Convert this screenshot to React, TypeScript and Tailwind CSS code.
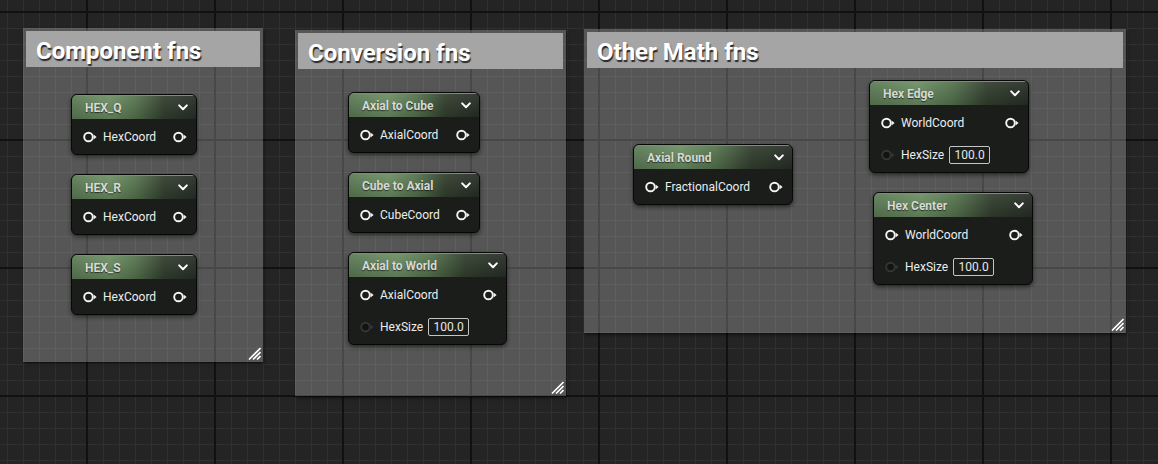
import React from "react";

type Row = { label: string; kind: "coord" | "size" };
type NodeDef = { title: string; pos: string; rows: Row[] };

const nodes: NodeDef[] = [
  { title: "HEX_Q", pos: "left-[71px] top-[94px] w-[126px]", rows: [{ label: "HexCoord", kind: "coord" }] },
  { title: "HEX_R", pos: "left-[71px] top-[174px] w-[126px]", rows: [{ label: "HexCoord", kind: "coord" }] },
  { title: "HEX_S", pos: "left-[71px] top-[254px] w-[126px]", rows: [{ label: "HexCoord", kind: "coord" }] },
  { title: "Axial to Cube", pos: "left-[348px] top-[92px] w-[132px]", rows: [{ label: "AxialCoord", kind: "coord" }] },
  { title: "Cube to Axial", pos: "left-[348px] top-[172px] w-[132px]", rows: [{ label: "CubeCoord", kind: "coord" }] },
  {
    title: "Axial to World",
    pos: "left-[348px] top-[252px] w-[159px]",
    rows: [
      { label: "AxialCoord", kind: "coord" },
      { label: "HexSize", kind: "size" },
    ],
  },
  { title: "Axial Round", pos: "left-[633px] top-[144px] w-[160px]", rows: [{ label: "FractionalCoord", kind: "coord" }] },
  {
    title: "Hex Edge",
    pos: "left-[869px] top-[80px] w-[160px]",
    rows: [
      { label: "WorldCoord", kind: "coord" },
      { label: "HexSize", kind: "size" },
    ],
  },
  {
    title: "Hex Center",
    pos: "left-[873px] top-[192px] w-[160px]",
    rows: [
      { label: "WorldCoord", kind: "coord" },
      { label: "HexSize", kind: "size" },
    ],
  },
];

const comments = [
  { title: "Component fns", pos: "left-[23px] top-[28px] w-[240px] h-[334px]" },
  { title: "Conversion fns", pos: "left-[295px] top-[30px] w-[271px] h-[366px]" },
  { title: "Other Math fns", pos: "left-[584px] top-[29px] w-[542px] h-[304px]" },
];

function Pin({ active = true }: { active?: boolean }) {
  const c = active ? "#f4f4f4" : "#353535";
  return (
    <svg width="15" height="12" viewBox="0 0 15 12" className="shrink-0">
      <circle cx="5.5" cy="6" r="4.3" fill={active ? "none" : "#131313"} stroke={c} strokeWidth="1.9" />
      <path d="M10.6 3.6 L13.6 6 L10.6 8.4 Z" fill={c} />
    </svg>
  );
}

function Chevron() {
  return (
    <svg width="10" height="7" viewBox="0 0 10 7" className="shrink-0">
      <path d="M1.2 1.4 L5 5.2 L8.8 1.4" fill="none" stroke="#ffffff" strokeWidth="2" strokeLinecap="round" strokeLinejoin="round" />
    </svg>
  );
}

function ResizeGrip() {
  return (
    <svg width="13" height="13" viewBox="0 0 13 13" className="absolute right-[2px] bottom-[2px]">
      <path d="M12.5 1 L1 12.5 M12.5 5 L5 12.5 M12.5 9 L9 12.5" stroke="#ffffff" strokeWidth="1.6" />
    </svg>
  );
}

function BpNode({ n }: { n: NodeDef }) {
  return (
    <div
      className={`absolute ${n.pos} flex flex-col rounded-[6px] border border-[#070707] bg-[#1b1d1b] shadow-[0_2px_4px_rgba(0,0,0,0.55)] overflow-hidden`}
    >
      <div className="flex h-6 items-center justify-between border-t border-t-[#7d8f79] bg-[image:linear-gradient(to_bottom,rgba(255,255,255,0.06),rgba(0,0,0,0.16)),linear-gradient(90deg,#5e7c57_0%,#6e9066_30%,#56744f_52%,#33402f_74%,#282f28_100%)] pl-[13px] pr-[8px]">
        <span className="text-[12px] font-bold leading-none text-[#d6d9d5] [text-shadow:0_1px_1px_rgba(0,0,0,0.6)]">
          {n.title}
        </span>
        <Chevron />
      </div>
      <div className="flex flex-col gap-3 pt-2 pb-[7px]">
        {n.rows.map((r, i) =>
          r.kind === "coord" ? (
            <div key={i} className="flex h-5 items-center pl-[11px] pr-[8px]">
              <Pin />
              <span className="ml-[5px] text-[12px] leading-none text-[#ececec]">{r.label}</span>
              <span className="ml-auto flex">
                <Pin />
              </span>
            </div>
          ) : (
            <div key={i} className="flex h-5 items-center pl-[11px] pr-[8px]">
              <Pin active={false} />
              <span className="ml-[5px] text-[12px] leading-none text-[#ececec]">{r.label}</span>
              <span className="ml-[5px] flex h-[18px] w-[41px] items-center justify-center rounded-[2px] border border-[#c4c4c4] text-[12px] leading-none text-[#e6e6e6]">
                100.0
              </span>
            </div>
          )
        )}
      </div>
    </div>
  );
}

export default function App() {
  return (
    <div className="relative h-[464px] w-[1158px] overflow-hidden bg-[#242424] bg-[image:linear-gradient(to_right,#111111_2px,transparent_2px),linear-gradient(to_bottom,#111111_2px,transparent_2px),linear-gradient(to_right,#303030_1px,transparent_1px),linear-gradient(to_bottom,#303030_1px,transparent_1px)] bg-[size:128px_128px,128px_128px,16px_16px,16px_16px] bg-[position:86px_11px,86px_11px,7px_12px,7px_12px] font-['Roboto',sans-serif]">
      {comments.map((c) => (
        <div
          key={c.title}
          className={`absolute ${c.pos} bg-white/[0.23] p-[3px] shadow-[1px_2px_3px_rgba(0,0,0,0.5)]`}
        >
          <div className="flex h-[36px] items-center bg-[#a5a5a5] pl-[10px] pt-[3px]">
            <span className="text-[24px] font-bold leading-none text-white [text-shadow:1px_2px_1px_rgba(0,0,0,0.75)]">
              {c.title}
            </span>
          </div>
          <ResizeGrip />
        </div>
      ))}
      {nodes.map((n) => (
        <BpNode key={n.title} n={n} />
      ))}
    </div>
  );
}
